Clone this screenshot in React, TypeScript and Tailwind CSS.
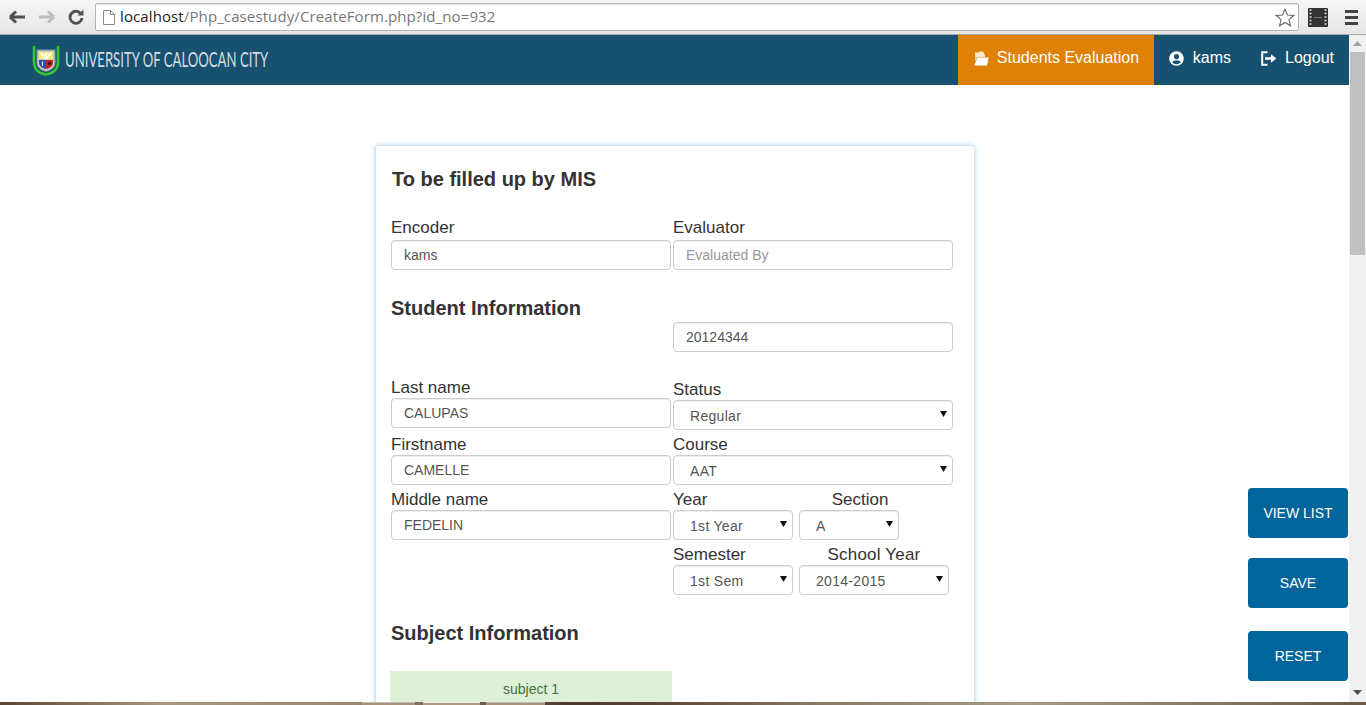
import { FaUserCircle } from "react-icons/fa";

const sans = "font-['Liberation_Sans',Arial,sans-serif]";

function Toolbar() {
  return (
    <div className="flex h-[35px] shrink-0 items-center bg-gradient-to-b from-[#f6f6f6] to-[#e6e6e6] border-b border-[#a9a9a9]">
      <div className="flex w-[95px] shrink-0 items-center pl-[9px]">
        <svg width="17" height="14" viewBox="0 0 17 14" className="text-[#505050]">
          <path d="M1 7 L7 1.5 M1 7 L7 12.5 M1.5 7 H16" fill="none" stroke="currentColor" strokeWidth="3" />
        </svg>
        <svg width="17" height="14" viewBox="0 0 17 14" className="ml-[12px] text-[#bdbdbd]">
          <path d="M16 7 L10 1.5 M16 7 L10 12.5 M15.5 7 H1" fill="none" stroke="currentColor" strokeWidth="3" />
        </svg>
        <svg width="16" height="16" viewBox="0 0 16 16" className="ml-[13px] text-[#505050]">
          <path d="M13.2 5.2 A6 6 0 1 0 14 9" fill="none" stroke="currentColor" strokeWidth="2.8" />
          <path d="M9.5 6.5 H15.5 V0.5 Z" fill="currentColor" />
        </svg>
      </div>
      <div className="flex h-[28px] w-[1204px] shrink-0 items-center rounded-[2px] border border-[#b4b4b4] bg-white pl-[7px] pr-[3px] shadow-[inset_0_1px_1px_#e4e4e4]">
        <svg width="12" height="15" viewBox="0 0 12 15" className="shrink-0">
          <path d="M0.5 0.5 H7.5 L11.5 4.5 V14.5 H0.5 Z M7.5 0.5 V4.5 H11.5" fill="#fff" stroke="#8a8a8a" />
        </svg>
        <p className="-mt-[2px] ml-[5px] font-['Open_Sans',sans-serif] text-[15px] tracking-[0.11px] text-[#777]">
          <span className="text-[#222]">localhost</span>/Php_casestudy/CreateForm.php?id_no=932
        </p>
        <svg width="20" height="19" viewBox="0 0 20 19" className="ml-auto shrink-0">
          <path d="M10 1.2 L12.5 7 L18.8 7.5 L14 11.6 L15.5 17.8 L10 14.5 L4.5 17.8 L6 11.6 L1.2 7.5 L7.5 7 Z" fill="#fff" stroke="#666" strokeWidth="1.1" />
        </svg>
      </div>
      <svg width="20" height="19" viewBox="0 0 20 19" className="ml-[9px] shrink-0">
        <rect width="20" height="19" rx="1" fill="#333" />
        <path d="M5 1 V18 M15 1 V18" stroke="#333" />
        <path d="M1.5 2 H3.5 M1.5 5.5 H3.5 M1.5 9 H3.5 M1.5 12.5 H3.5 M1.5 16 H3.5 M16.5 2 H18.5 M16.5 5.5 H18.5 M16.5 9 H18.5 M16.5 12.5 H18.5 M16.5 16 H18.5" stroke="#ddd" strokeWidth="1.6" />
        <path d="M6 9.5 H14" stroke="#777" />
      </svg>
      <div className="ml-[17px] flex w-[13px] shrink-0 flex-col gap-[3px]">
        <span className="h-[3px] bg-[#444]" />
        <span className="h-[3px] bg-[#444]" />
        <span className="h-[3px] bg-[#444]" />
      </div>
    </div>
  );
}

function Logo() {
  return (
    <svg width="28" height="31" viewBox="0 0 28 31" className="shrink-0">
      <path d="M2 1 V17 C2 25 8 29 14 29.5 C20 29 26 25 26 17 V1" fill="none" stroke="#35c52d" strokeWidth="2.6" />
      <path d="M5 5 H23 V18 C23 23 18 25.5 14 26.5 C10 25.5 5 23 5 18 Z" fill="#c9c9c9" stroke="#7e8f98" />
      <path d="M7 7 H21 V14 H7 Z" fill="#f3ee7c" />
      <path d="M14 14 L9 8 M14 14 L14 7.5 M14 14 L19 8" stroke="#fff" strokeWidth="1.4" />
      <path d="M7 15 H14 V24 C11 23.4 7 21.5 7 18 Z" fill="#2d4ba0" />
      <path d="M14 15 H21 V18 C21 21.5 17 23.4 14 24 Z" fill="#c92020" />
      <circle cx="17.5" cy="18.5" r="1.8" fill="#3a1a12" />
      <path d="M10.5 16.5 V21" stroke="#e6e6e6" strokeWidth="1.2" />
    </svg>
  );
}

function Navbar() {
  return (
    <nav className="flex h-[50px] shrink-0 items-stretch bg-[#18506f] text-white">
      <div className="ml-[32px] flex items-center">
        <Logo />
        <span className="-mt-[3px] ml-[5px] block w-[203px] origin-left scale-x-[0.626] whitespace-nowrap font-['Lato',sans-serif] text-[21px] leading-none text-[#d3dde3]">
          UNIVERSITY OF CALOOCAN CITY
        </span>
      </div>
      <div className={`ml-auto flex items-stretch pb-[4px] text-[16px] ${sans}`}>
        <a className="-mb-[4px] flex w-[196px] items-center bg-[#e08107] pb-[4px] pl-[15px]">
          <svg width="16" height="15" viewBox="0 0 16 15" fill="#fff" className="shrink-0">
            <path d="M2 3 V1.5 H6 L7 0.5 H10 L12 4 V6 H4 L2.5 11 Z" opacity="0.8" />
            <path d="M4.6 6.5 H15.8 L14 14.5 H1.2 Z" />
          </svg>
          <span className="ml-[8px]">Students Evaluation</span>
        </a>
        <a className="flex items-center pl-[15px]">
          <FaUserCircle className="text-[15px]" />
          <span className="ml-[9px]">kams</span>
        </a>
        <a className="flex items-center pl-[30px] pr-[15px]">
          <svg width="16" height="15" viewBox="0 0 16 15" fill="none" stroke="#fff" className="shrink-0">
            <path d="M6.5 1.2 H1.2 V13.8 H6.5" strokeWidth="2" />
            <path d="M4 7.5 H11" strokeWidth="2.6" />
            <path d="M10 3.2 L15.4 7.5 L10 11.8 Z" fill="#fff" stroke="none" />
          </svg>
          <span className="ml-[8px]">Logout</span>
        </a>
      </div>
    </nav>
  );
}

function TextInput({ value, placeholder }: { value?: string; placeholder?: string }) {
  return (
    <input
      readOnly
      value={value}
      placeholder={placeholder}
      className="block h-[30px] w-[280px] rounded-[4px] border border-[#ccc] bg-white px-[12px] text-[14px] text-[#555] shadow-[inset_0_1px_1px_rgba(0,0,0,0.075)] outline-none placeholder:text-[#999]"
    />
  );
}

function Select({ value, width }: { value: string; width: string }) {
  return (
    <div className={`relative h-[30px] ${width}`}>
      <select
        defaultValue={value}
        className="block h-[30px] w-full appearance-none rounded-[4px] border border-[#ccc] bg-white pl-[16px] pt-[2px] text-[14px] tracking-[0.3px] text-[#555] shadow-[inset_0_1px_1px_rgba(0,0,0,0.075)] outline-none"
      >
        <option>{value}</option>
      </select>
      <svg width="7" height="6" viewBox="0 0 7 6" className="pointer-events-none absolute right-[6px] top-[11px]">
        <path d="M0 0 H7 L3.5 6 Z" fill="#111" />
      </svg>
    </div>
  );
}

function Label({ children, className = "" }: { children: string; className?: string }) {
  return <label className={`block h-[20px] pt-px text-[17px] leading-[20px] text-[#333] ${className}`}>{children}</label>;
}

function Heading({ children, className = "" }: { children: string; className?: string }) {
  return <h4 className={`h-[24px] text-[20px] font-bold leading-[24px] text-[#333] ${className}`}>{children}</h4>;
}

function FormCard() {
  return (
    <section className={`ml-[375px] mt-[60px] h-[700px] w-[600px] rounded-[3px] border border-[#cfe5f6] bg-white pl-[15px] pt-[21px] shadow-[0_0_5px_#b5d8f3] ${sans}`}>
      <Heading className="ml-px">To be filled up by MIS</Heading>

      <div className="mt-[26px] flex gap-[2px]">
        <div>
          <Label className="mb-[3px]">Encoder</Label>
          <TextInput value="kams" />
        </div>
        <div>
          <Label className="mb-[3px]">Evaluator</Label>
          <TextInput placeholder="Evaluated By" />
        </div>
      </div>

      <Heading className="mt-[26px]">Student Information</Heading>

      <div className="mt-[2px] flex gap-[2px]">
        <div className="w-[280px] pt-[55px]">
          <Label className="mb-px">Last name</Label>
          <TextInput value="CALUPAS" />
          <Label className="mb-px mt-[6px]">Firstname</Label>
          <TextInput value="CAMELLE" />
          <Label className="mb-px mt-[4px]">Middle name</Label>
          <TextInput value="FEDELIN" />
        </div>
        <div className="w-[280px]">
          <TextInput value="20124344" />
          <Label className="mb-px mt-[27px]">Status</Label>
          <Select value="Regular" width="w-[280px]" />
          <Label className="mb-px mt-[4px]">Course</Label>
          <Select value="AAT" width="w-[280px]" />
          <div className="mt-[4px] flex gap-[6px]">
            <div>
              <Label className="mb-px">Year</Label>
              <Select value="1st Year" width="w-[120px]" />
            </div>
            <div>
              <Label className="mb-px w-[122px] text-center">Section</Label>
              <Select value="A" width="w-[100px]" />
            </div>
          </div>
          <div className="mt-[4px] flex gap-[6px]">
            <div>
              <Label className="mb-px">Semester</Label>
              <Select value="1st Sem" width="w-[120px]" />
            </div>
            <div>
              <Label className="mb-px text-center tracking-[0.2px]">School Year</Label>
              <Select value="2014-2015" width="w-[150px]" />
            </div>
          </div>
        </div>
      </div>

      <Heading className="mt-[26px]">Subject Information</Heading>

      <div className="-ml-px mt-[26px] h-[40px] w-[282px] bg-[#dff0d8] pt-[9px] text-center text-[14px] leading-[18px] text-[#3c763d]">
        subject 1
      </div>
    </section>
  );
}

function Scrollbar() {
  return (
    <div className="flex w-[17px] shrink-0 flex-col items-center bg-[#f1f1f1]">
      <svg width="9" height="5" viewBox="0 0 9 5" className="mt-[6px]">
        <path d="M0 5 L4.5 0 L9 5 Z" fill="#a3a3a3" />
      </svg>
      <div className="mt-[6px] h-[203px] w-[15px] bg-[#c1c1c1]" />
      <svg width="9" height="5" viewBox="0 0 9 5" className="mt-auto mb-[10px]">
        <path d="M0 0 L4.5 5 L9 0 Z" fill="#505050" />
      </svg>
    </div>
  );
}

function SideButton({ label, className = "" }: { label: string; className?: string }) {
  return (
    <button type="button" className={`h-[50px] w-[100px] rounded-[4px] bg-[#00659a] text-[14px] text-white ${className}`}>
      {label}
    </button>
  );
}

export default function App() {
  return (
    <div className={`relative flex h-[705px] flex-col overflow-hidden bg-white ${sans}`}>
      <Toolbar />
      <div className="flex min-h-0 flex-1">
        <div className="relative min-w-0 flex-1 overflow-hidden">
          <Navbar />
          <FormCard />
          <div className={`absolute right-px top-[453px] flex flex-col ${sans}`}>
            <SideButton label="VIEW LIST" />
            <SideButton label="SAVE" className="mt-[20px]" />
            <SideButton label="RESET" className="mt-[23px]" />
          </div>
        </div>
        <Scrollbar />
      </div>
      <div className="absolute inset-x-0 bottom-0 h-[3px] bg-[linear-gradient(to_right,#5a4636_0%,#a89880_12%,#9a8872_26%,#4d3b30_42%,#5a4636_48%,#8a7a68_60%,#a59a88_75%,#6b5a4a_100%)]">
        <div className="ml-[362px] flex h-full">
          <span className="w-[53px] border-t border-[#c4bdb0] bg-[#a8927c]" />
          <span className="ml-[8px] w-[57px] border-t border-[#f4efe6] bg-[#b09a84]" />
          <span className="ml-[6px] w-[59px] border-t border-[#c4bdb0] bg-[#a8927c]" />
        </div>
      </div>
    </div>
  );
}
